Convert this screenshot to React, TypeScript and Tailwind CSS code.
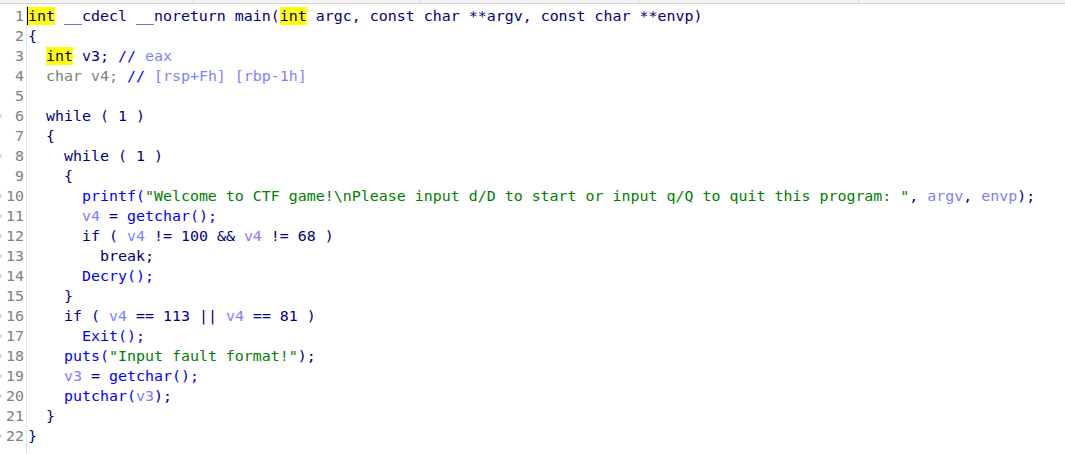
type Seg = [string, string];

const KW = 'text-[#000080]';
const FN = 'text-[#0000ff]';
const VAR = 'text-[#8080ff]';
const STR = 'text-[#008000]';
const GRAY = 'text-[#808080]';
const HL = 'text-[#000080] bg-[#ffff00]';

const LINES: Seg[][] = [
  [['int', HL], [' __cdecl __noreturn main(', KW], ['int', HL], [' argc, const char **argv, const char **envp)', KW]],
  [['{', KW]],
  [['  ', KW], ['int', HL], [' v3; ', KW], ['// ', FN], ['eax', VAR]],
  [['  char v4; ', GRAY], ['// ', FN], ['[rsp+Fh] [rbp-1h]', VAR]],
  [],
  [['  while ( 1 )', KW]],
  [['  {', KW]],
  [['    while ( 1 )', KW]],
  [['    {', KW]],
  [
    ['      ', KW],
    ['printf(', FN],
    ['"Welcome to CTF game!\\nPlease input d/D to start or input q/Q to quit this program: "', STR],
    [', ', KW],
    ['argv', VAR],
    [', ', KW],
    ['envp', VAR],
    [');', KW],
  ],
  [['      ', KW], ['v4', VAR], [' = ', KW], ['getchar();', FN]],
  [['      if ( ', KW], ['v4', VAR], [' != 100 && ', KW], ['v4', VAR], [' != 68 )', KW]],
  [['        break;', KW]],
  [['      ', KW], ['Decry();', FN]],
  [['    }', KW]],
  [['    if ( ', KW], ['v4', VAR], [' == 113 || ', KW], ['v4', VAR], [' == 81 )', KW]],
  [['      ', KW], ['Exit();', FN]],
  [['    ', KW], ['puts(', FN], ['"Input fault format!"', STR], [');', KW]],
  [['    ', KW], ['v3', VAR], [' = ', KW], ['getchar();', FN]],
  [['    ', KW], ['putchar(', FN], ['v3', VAR], [');', KW]],
  [['  }', KW]],
  [['}', KW]],
];

const MARKED = new Set([6, 8, 10, 11, 12, 13, 14, 16, 17, 18, 19, 20, 22]);

export default function App() {
  return (
    <div className="relative h-[454px] w-[1065px] overflow-hidden bg-white font-['DejaVu_Sans_Mono','Liberation_Mono',monospace] text-[14.95px]">
      {/* remnant of the tab strip above the view */}
      <div className="relative h-[4px] border-b border-[#d4d4d4] bg-[#f3f3f3]">
        <div className="absolute left-[193px] top-0 h-[3px] w-px bg-[#d4d4d4]" />
        <div className="absolute left-[420px] top-0 h-[3px] w-px bg-[#d4d4d4]" />
        <div className="absolute left-[638px] top-0 h-[3px] w-px bg-[#d4d4d4]" />
        <div className="absolute left-[858px] top-0 h-[3px] w-px bg-[#d4d4d4]" />
      </div>
      <div className="flex pt-[2px]">
        <div className="w-[27px] shrink-0 border-r border-[#e4e4e4] pb-[20px]">
          {LINES.map((_, i) => (
            <div key={i} className="relative flex h-[20px] items-center justify-end pr-[2px] leading-[20px] text-[#808080]">
              {MARKED.has(i + 1) && (
                <span className="absolute -left-[2px] top-[8px] h-[4px] w-[4px] rounded-full bg-[#c8dcf0]" />
              )}
              {i + 1}
            </div>
          ))}
        </div>
        <div className="relative pl-[1px]">
          <span className="absolute left-0 top-[1px] h-[18px] w-px bg-black" />
          {LINES.map((segs, i) => (
            <div key={i} className="h-[20px] whitespace-pre leading-[20px]">
              {segs.map(([t, c], j) => (
                <span key={j} className={c}>
                  {t}
                </span>
              ))}
            </div>
          ))}
        </div>
      </div>
    </div>
  );
}
